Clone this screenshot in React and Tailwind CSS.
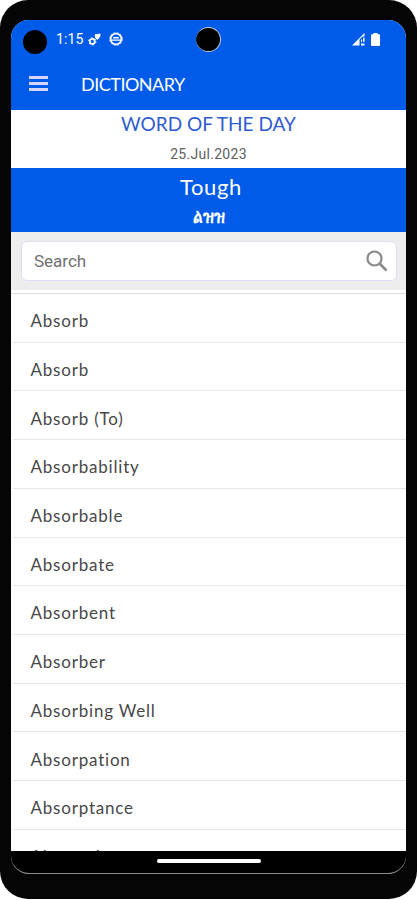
const words = [
  "Absorb",
  "Absorb",
  "Absorb (To)",
  "Absorbability",
  "Absorbable",
  "Absorbate",
  "Absorbent",
  "Absorber",
  "Absorbing Well",
  "Absorpation",
  "Absorptance",
  "Absorption",
];

function StatusBar() {
  return (
    <div className="relative flex h-[38px] items-center justify-between pl-[45px] pr-[26px] text-white">
      <span className="absolute left-[12px] top-[10px] h-[24px] w-[24px] rounded-full bg-black" />
      <span className="absolute left-[185px] top-[7px] h-[25px] w-[25px] rounded-full border border-l-0 border-white/80 bg-black" />
      <div className="flex items-center">
        <span className="w-[28px] font-[Roboto] text-[14px] leading-none tracking-[0.1px]">
          1:15
        </span>
        <svg className="ml-[4px] h-[13px] w-[13px]" viewBox="0 0 13 13" fill="none">
          <circle cx="4.3" cy="8.4" r="2.5" stroke="white" strokeWidth="1.7" />
          <circle
            cx="4.3"
            cy="8.4"
            r="3.6"
            stroke="white"
            strokeWidth="1"
            strokeDasharray="1.8 1.97"
          />
          <circle cx="9.3" cy="3.2" r="2.2" fill="white" />
          <path d="M7 .9l2 .6 2-1.1 1.5.6-.2 2.5-1.5 2-1.5 1.5-1.5-1.5-1-2z" fill="white" />
        </svg>
        <svg className="ml-[8px] h-[14px] w-[14px]" viewBox="0 0 14 14" fill="none">
          <circle cx="7" cy="7" r="5.4" stroke="white" strokeWidth="1.7" />
          <circle
            cx="7"
            cy="7"
            r="6.5"
            stroke="white"
            strokeWidth="0.6"
            strokeDasharray="2 1.4"
          />
          <path d="M4.2 5.7h5.6M1.800 8.100h10.400" stroke="white" strokeWidth="1.4" />
        </svg>
      </div>
      <div className="flex items-center gap-[5px]">
        <svg className="h-[13px] w-[14px]" viewBox="0 0 14 13">
          <path d="M0 12.5 12.5 0v3.5h-2l-3 3v6z" fill="white" />
          <path d="M11 4.8h1.5v4H11zM9 10.5h3.5v2H9zM9 6.5h1v2.5H9z" fill="white" />
        </svg>
        <svg className="h-[13px] w-[9px]" viewBox="0 0 9 13">
          <path d="M2.5 0h4v1.3H8q1 0 1 1V12q0 1-1 1H1q-1 0-1-1V2.3q0-1 1-1h1.5z" fill="white" />
        </svg>
      </div>
    </div>
  );
}

function AppBar() {
  return (
    <div className="flex h-[52px] items-center pl-[18px] text-white">
      <div className="-mt-px flex w-[19px] flex-col gap-[3px]">
        <span className="h-[3px] bg-[#d5d5ff]" />
        <span className="h-[3px] bg-[#d5d5ff]" />
        <span className="h-[3px] bg-[#d5d5ff]" />
      </div>
      <h1 className="-mt-px ml-[33px] text-[18px] leading-none tracking-[-0.5px]">DICTIONARY</h1>
    </div>
  );
}

function WordOfTheDay() {
  return (
    <section className="text-center">
      <div className="flex h-[58px] flex-col items-center bg-white">
        <h2 className="mt-[3px] text-[19px] leading-[22px] text-[#2f5ccf]">
          WORD OF THE DAY
        </h2>
        <p className="mt-[9px] font-[Roboto] text-[14px] leading-[20px] tracking-[0.3px] text-[#606060]">
          25.Jul.2023
        </p>
      </div>
      <div className="flex h-[64px] flex-col items-center bg-[#005be8] text-white">
        <p className="mt-[6px] pl-[5px] text-[22px] leading-[26px] tracking-[0.6px]">Tough</p>
        <p className="mt-[5px] scale-y-[1.3] text-[15px] font-bold leading-[20px]">ልዝዝ</p>
      </div>
    </section>
  );
}

function SearchBox() {
  return (
    <div className="h-[58px] bg-[#ededed] pl-[10px] pr-[9px] pt-[9px]">
      <div className="flex h-[40px] items-center rounded-[6px] border border-[#dcdcf4] bg-white pl-[12px] pr-[8px]">
        <input
          className="w-0 flex-1 pt-[2px] font-[Roboto] text-[17px] outline-none placeholder:text-[#707070]"
          placeholder="Search"
        />
        <svg className="h-[22px] w-[22px]" viewBox="0 0 22 22" fill="none" stroke="#8a8a8a">
          <circle cx="8.500" cy="8.500" r="7" strokeWidth="2.200" />
          <path d="M13.500 13.500l7 7" strokeWidth="2.700" />
        </svg>
      </div>
    </div>
  );
}

function WordList() {
  return (
    <ul className="mt-[3px] flex-1 overflow-hidden border-t border-[#dedede] bg-white">
      {words.map((word, i) => (
        <li
          key={i}
          className="ml-[2px] flex h-[48.73px] items-center border-b-[1.5px] border-[#e6e6e6] pl-[17.5px] pt-[6px] text-[17px] tracking-[0.8px] text-[#484848]"
        >
          {word}
        </li>
      ))}
    </ul>
  );
}

export default function App() {
  return (
    <div className="h-[900px] w-[417px] bg-white font-[Lato,sans-serif]">
      <div className="flex h-[899px] w-[417px] flex-col rounded-[28px] bg-[#050505] pb-[25px] pl-[11px] pr-[11px] pt-[20px]">
        <div className="flex min-h-0 flex-1 flex-col overflow-hidden rounded-[18px] border-b border-[#8a8a8a] bg-white">
          <header className="bg-[#005be8]">
            <StatusBar />
            <AppBar />
          </header>
          <WordOfTheDay />
          <SearchBox />
          <WordList />
          <div className="flex h-[22px] justify-center bg-black pt-[8px]">
            <span className="h-[4px] w-[104px] rounded-full bg-white" />
          </div>
        </div>
      </div>
    </div>
  );
}
